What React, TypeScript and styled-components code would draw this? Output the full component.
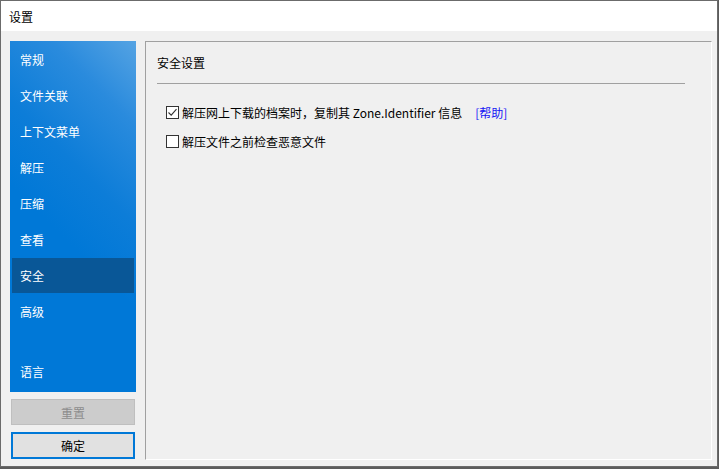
import React, { useState } from 'react';
import styled, { createGlobalStyle } from 'styled-components';

const GlobalStyle = createGlobalStyle`
  html, body {
    margin: 0;
    padding: 0;
    background: #5c5c5c;
  }
  body {
    font-family: "Noto Sans CJK SC", "Noto Sans", sans-serif;
    font-size: 12px;
  }
`;

const Window = styled.div`
  box-sizing: border-box;
  width: 718px;
  height: 467px;
  border: 1px solid #6b6b6b;
  background: #f0f0f0;
  display: flex;
  flex-direction: column;
`;

const TitleBar = styled.div`
  height: 30px;
  background: #ffffff;
  display: flex;
  align-items: center;
  padding-left: 8px;
  color: #000;
  font-size: 12px;
`;

const Body = styled.div`
  flex: 1;
  display: flex;
  gap: 9px;
  padding: 10px 5px 6px 9px;
  min-height: 0;
`;

const LeftColumn = styled.div`
  width: 126px;
  display: flex;
  flex-direction: column;
  gap: 7px;
`;

const Sidebar = styled.nav`
  height: 351px;
  box-sizing: border-box;
  padding: 1px 2px 2px;
  background: linear-gradient(225deg, #55a3e3 0px, #2a8bdd 60px, #0d7dd8 130px, #0078d7 190px);
  display: flex;
  flex-direction: column;
  gap: 1px;
`;

const NavItem = styled.div<{ $active?: boolean; $spaced?: boolean }>`
  height: 35px;
  flex-shrink: 0;
  display: flex;
  align-items: center;
  padding-left: 8px;
  margin-top: ${(p) => (p.$spaced ? '24px' : '0')};
  color: #ffffff;
  background: ${(p) => (p.$active ? '#095797' : 'transparent')};
  cursor: default;
`;

const Button = styled.button<{ $primary?: boolean; $disabled?: boolean }>`
  box-sizing: border-box;
  margin: 0 1px;
  height: ${(p) => (p.$primary ? '27px' : '26px')};
  font-family: inherit;
  font-size: 12px;
  border: ${(p) => (p.$primary ? '2px solid #0078d7' : '1px solid #bfbfbf')};
  background: ${(p) => (p.$primary ? '#e1e1e1' : '#cccccc')};
  color: ${(p) => (p.$disabled ? '#8d8d8d' : '#000000')};
  padding: 0;
`;

const Panel = styled.section`
  flex: 1;
  box-sizing: border-box;
  border-top: 1px solid #a0a0a0;
  border-left: 1px solid #a0a0a0;
  border-right: 1px solid #ffffff;
  border-bottom: 1px solid #ffffff;
  padding: 0 26px 0 11px;
`;

const PanelTitle = styled.div`
  margin-top: 13px;
  line-height: 16px;
  color: #000;
`;

const Separator = styled.div`
  margin-top: 12px;
  height: 1px;
  background: #a0a0a0;
`;

const OptionList = styled.div`
  margin-top: 20px;
  padding-left: 9px;
  display: flex;
  flex-direction: column;
  gap: 13px;
`;

const OptionRow = styled.label`
  display: flex;
  align-items: center;
  height: 16px;
  color: #000;
  cursor: default;
`;

const Box = styled.span`
  box-sizing: border-box;
  width: 13px;
  height: 13px;
  border: 1px solid #333333;
  background: #ffffff;
  margin-right: 3px;
  display: flex;
  align-items: center;
  justify-content: center;
`;

const HelpLink = styled.a`
  margin-left: 13px;
  color: #1515f5;
  text-decoration: none;
`;

const Check = () => (
  <svg width="11" height="11" viewBox="0 0 11 11">
    <path d="M1.5 5.5 L4.2 8.2 L9.5 2.2" fill="none" stroke="#333" strokeWidth="1.1" />
  </svg>
);

const navItems = ['常规', '文件关联', '上下文菜单', '解压', '压缩', '查看', '安全', '高级'];

export default function App() {
  const [active, setActive] = useState('安全');
  const [copyZone, setCopyZone] = useState(true);
  const [scan, setScan] = useState(false);

  return (
    <>
      <GlobalStyle />
      <Window>
        <TitleBar>设置</TitleBar>
        <Body>
          <LeftColumn>
            <Sidebar>
              {navItems.map((name) => (
                <NavItem key={name} $active={active === name} onClick={() => setActive(name)}>
                  {name}
                </NavItem>
              ))}
              <NavItem $spaced $active={active === '语言'} onClick={() => setActive('语言')}>
                语言
              </NavItem>
            </Sidebar>
            <Button $disabled>重置</Button>
            <Button $primary>确定</Button>
          </LeftColumn>
          <Panel>
            <PanelTitle>安全设置</PanelTitle>
            <Separator />
            <OptionList>
              <OptionRow onClick={() => setCopyZone(!copyZone)}>
                <Box>{copyZone && <Check />}</Box>
                解压网上下载的档案时，复制其 Zone.Identifier 信息
                <HelpLink href="#" onClick={(e) => e.preventDefault()}>[帮助]</HelpLink>
              </OptionRow>
              <OptionRow onClick={() => setScan(!scan)}>
                <Box>{scan && <Check />}</Box>
                解压文件之前检查恶意文件
              </OptionRow>
            </OptionList>
          </Panel>
        </Body>
      </Window>
    </>
  );
}
